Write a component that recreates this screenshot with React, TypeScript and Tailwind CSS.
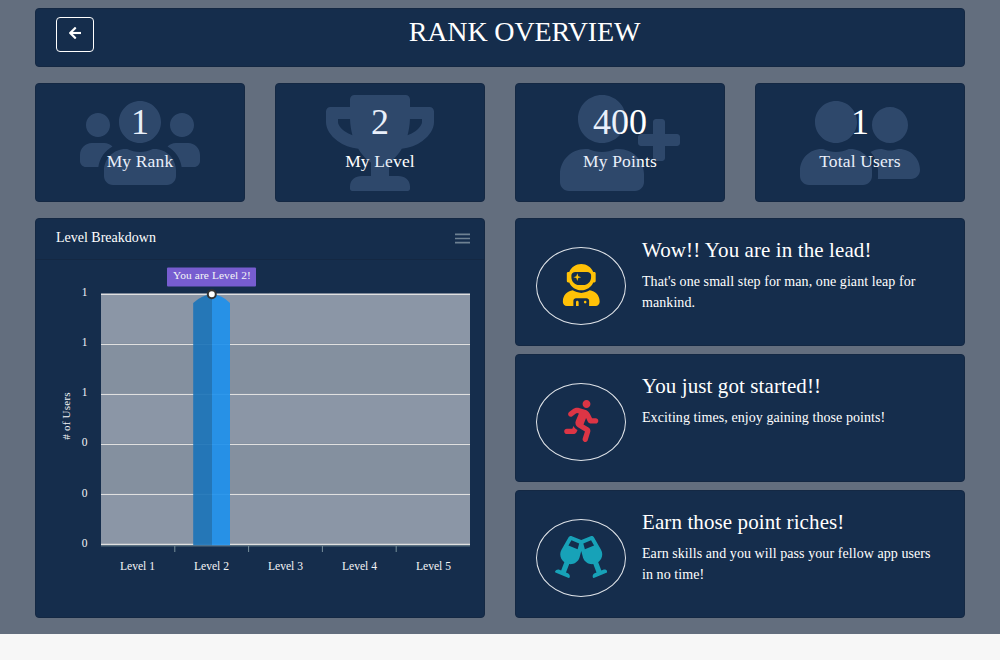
import type { ReactNode } from 'react';
import type { IconType } from 'react-icons';
import {
  FaArrowLeft,
  FaGlassCheers,
  FaRunning,
  FaTrophy,
  FaUserAstronaut,
  FaUserFriends,
  FaUserPlus,
  FaUsers,
} from 'react-icons/fa';

function Card({ className, children }: { className: string; children: ReactNode }) {
  return (
    <section className={`rounded-[4px] border border-[#142843] bg-[#152d4c] ${className}`}>{children}</section>
  );
}

function StatCard({ value, label, icon: Icon }: { value: string; label: string; icon: IconType }) {
  return (
    <Card className="relative flex h-[119px] w-[210px] flex-col items-center">
      <div className="mt-[18px] text-[36px] leading-[40px]">{value}</div>
      <div className="mt-[6px] text-[17.5px] leading-[26px] tracking-[0.15px]">{label}</div>
      <div className="absolute inset-x-0 top-[11px] flex justify-center text-[#93b4e8] opacity-20">
        <Icon className="h-[96px] w-[120px]" />
      </div>
    </Card>
  );
}

interface Achievement {
  title: string;
  text: string;
  icon: IconType;
  color: string;
}

const achievements: Achievement[] = [
  {
    title: 'Wow!! You are in the lead!',
    text: "That's one small step for man, one giant leap for mankind.",
    icon: FaUserAstronaut,
    color: 'text-[#ffc107]',
  },
  {
    title: 'You just got started!!',
    text: 'Exciting times, enjoy gaining those points!',
    icon: FaRunning,
    color: 'text-[#dc3545]',
  },
  {
    title: 'Earn those point riches!',
    text: 'Earn skills and you will pass your fellow app users in no time!',
    icon: FaGlassCheers,
    color: 'text-[#17a2b8]',
  },
];

function AchievementCard({ title, text, icon: Icon, color }: Achievement) {
  return (
    <Card className="flex h-[128px] pl-[20px]">
      <div
        className={`mt-[28px] flex h-[78px] w-[90px] shrink-0 items-start justify-center rounded-[50%] border border-[#dfe3e8] pt-[16px] ${color}`}
      >
        <Icon className="h-[42px] w-[52.5px]" />
      </div>
      <div className="ml-[16px] mt-[19px] w-[298px]">
        <h2 className="text-[21px] leading-[25px] tracking-[0.1px]">{title}</h2>
        <p className="mt-[8px] text-[14px] leading-[21px] tracking-[0.07px]">{text}</p>
      </div>
    </Card>
  );
}

const rows = [
  { y: 34, label: '1', textY: 36 },
  { y: 84, label: '1', textY: 86 },
  { y: 134, label: '1', textY: 136 },
  { y: 184, label: '0', textY: 186 },
  { y: 234, label: '0', textY: 236.6 },
  { y: 284, label: '0', textY: 286.6 },
];

function LevelChart() {
  return (
    <svg width="448" height="356" viewBox="36 260 448 356" className="block">
      <g transform="translate(0 260)">
        {rows.slice(0, 5).map((row, i) => (
          <rect
            key={row.y}
            x="101"
            y={row.y - 0.6}
            width="369"
            height={i === 4 ? 52 : 50}
            fill={i % 2 === 0 ? '#8b96a6' : '#84909f'}
          />
        ))}
        {rows.map((row) => (
          <g key={row.y}>
            <line x1="101" x2="470" y1={row.y + 0.4} y2={row.y + 0.4} stroke="#e0e0e0" strokeWidth="1.1" />
            <text x="87.5" y={row.textY} textAnchor="end" fontSize="11.5" fill="#f4f5f7">
              {row.label}
            </text>
          </g>
        ))}
        <line x1="101" x2="470" y1="285.9" y2="285.9" stroke="#6c8290" />
        {[174.8, 248.6, 322.4, 396.2].map((x) => (
          <line key={x} x1={x} x2={x} y1="286" y2="292" stroke="#78909c" />
        ))}
        <path d="M193.2 285.2V43Q202 34.6 212 34.2V285.2Z" fill="#1c74b8" fillOpacity="0.92" />
        <path d="M212 285.2V34.2Q222 34.6 230 43V285.2Z" fill="#1e90ec" fillOpacity="0.92" />
        {['Level 1', 'Level 2', 'Level 3', 'Level 4', 'Level 5'].map((label, i) => (
          <text key={label} x={137.5 + i * 74} y="310" textAnchor="middle" fontSize="11.6" fill="#f4f5f7">
            {label}
          </text>
        ))}
        <text
          transform="translate(70 156) rotate(-90)"
          textAnchor="middle"
          fontSize="11"
          letterSpacing="0.25"
          fill="#f4f5f7"
        >
          # of Users
        </text>
        <rect x="167" y="7.5" width="89" height="19" rx="1" fill="#775dd0" />
        <text x="212" y="19" textAnchor="middle" fontSize="11.4" letterSpacing="0.1" fill="#f4f5f7">
          You are Level 2!
        </text>
        <circle cx="211.8" cy="34.2" r="4" fill="#fff" stroke="#333" strokeWidth="2" />
      </g>
    </svg>
  );
}

export default function App() {
  return (
    <div className="h-[660px] overflow-hidden bg-[#f7f7f7] font-['Liberation_Serif',serif] text-white">
      <main className="flex h-[634px] flex-col bg-[#636e7e] px-[35px] pt-[8px]">
        <Card className="flex h-[59px] items-start pl-[20px]">
          <button
            aria-label="Back"
            className="mt-[8px] flex h-[35px] w-[38px] justify-center rounded-[4px] border border-white pt-[8px]"
          >
            <FaArrowLeft className="h-[14px] w-[12.25px]" strokeWidth="4" />
          </button>
          <h1 className="mr-[44px] mt-[6px] flex-1 pl-[35px] text-center text-[28px] leading-[34px] tracking-[-0.15px]">
            RANK OVERVIEW
          </h1>
        </Card>
        <div className="mt-[16px] flex justify-between">
          <StatCard value="1" label="My Rank" icon={FaUsers} />
          <StatCard value="2" label="My Level" icon={FaTrophy} />
          <StatCard value="400" label="My Points" icon={FaUserPlus} />
          <StatCard value="1" label="Total Users" icon={FaUserFriends} />
        </div>
        <div className="mt-[16px] flex justify-between">
          <Card className="h-[400px] w-[450px]">
            <header className="flex h-[41px] items-start justify-between border-b border-[#142843] pl-[20px] pr-[14px] text-[14px] leading-[21px]">
              <span className="mt-[8px]">Level Breakdown</span>
              <svg width="15" height="11" viewBox="0 0 15 11" className="mt-[14px]" stroke="#6e8192" strokeWidth="1.7">
                <path d="M0 1.3H15M0 5.5H15M0 9.7H15" />
              </svg>
            </header>
            <LevelChart />
          </Card>
          <div className="flex w-[450px] flex-col gap-[8px]">
            {achievements.map((item) => (
              <AchievementCard key={item.title} {...item} />
            ))}
          </div>
        </div>
      </main>
    </div>
  );
}
